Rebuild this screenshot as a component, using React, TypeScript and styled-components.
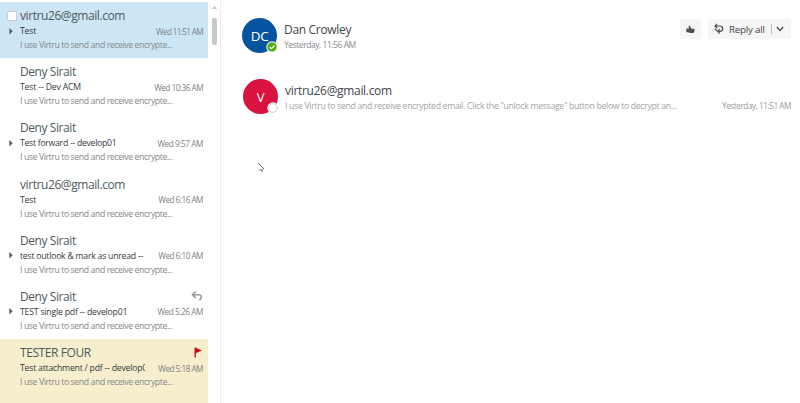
import React from "react";
import styled, { createGlobalStyle } from "styled-components";

const Global = createGlobalStyle`
  * { box-sizing: border-box; }
  html, body { margin: 0; background: #fff; overflow: hidden; }
  body { font-family: "Open Sans", "Noto Sans", sans-serif; white-space: nowrap; }
`;

const Page = styled.div`
  display: flex;
  width: 800px;
  height: 403px;
  overflow: hidden;
`;

const ListPane = styled.aside`
  display: flex;
  width: 221px;
  border-right: 1px solid #f0ede6;
`;

const MessageList = styled.div`
  width: 208px;
  padding-top: 2px;
`;

const Scrollbar = styled.div`
  width: 12px;
  display: flex;
  flex-direction: column;
  align-items: center;
  padding: 6px 0 0 1px;
`;

const Thumb = styled.div`
  width: 5px;
  height: 27px;
  margin-top: 9px;
  border-radius: 2px;
  background: #c9c6cc;
`;

const Row = styled.article<{ $bg: string; $last: boolean }>`
  height: ${(p) => (p.$last ? 66 : 56.2)}px;
  padding: 5px 5px 0 7px;
  background: ${(p) => p.$bg};
`;

const NameLine = styled.div`
  height: 17px;
  display: flex;
  align-items: center;
`;

const Gutter = styled.div`
  width: 13px;
  flex: none;
  display: flex;
  align-items: center;
`;

const Checkbox = styled.span`
  width: 10px;
  height: 10px;
  background: #fff;
  border: 1px solid #d2ccd6;
`;

const ListName = styled.span`
  flex: 1;
  font-size: 12px;
  line-height: 17px;
  letter-spacing: -0.42px;
  color: #4c5a60;
`;

const SubjectLine = styled.div`
  height: 14px;
  display: flex;
  align-items: center;
`;

const Subject = styled.span<{ $spacing: number }>`
  width: 125px;
  overflow: hidden;
  font-size: 8.7px;
  line-height: 14px;
  letter-spacing: ${(p) => p.$spacing}px;
  color: #333b3e;
`;

const Time = styled.span<{ $spacing: number }>`
  flex: 1;
  text-align: right;
  font-size: 8.2px;
  line-height: 13px;
  letter-spacing: ${(p) => p.$spacing}px;
  color: #7c8287;
`;

const Preview = styled.div`
  padding-left: 13px;
  font-size: 8.7px;
  line-height: 14px;
  letter-spacing: -0.4px;
  color: #83898c;
`;

const Reading = styled.main`
  flex: 1;
  padding: 18px 9px 0 21px;
`;

const Message = styled.section<{ $gap: number; $indent: number }>`
  display: flex;
  height: 36px;
  margin-bottom: ${(p) => p.$gap}px;
  padding-left: ${(p) => p.$indent}px;
`;

const Avatar = styled.div<{ $bg: string; $size: number }>`
  position: relative;
  width: 35px;
  height: 35px;
  flex: none;
  border-radius: 50%;
  background: ${(p) => p.$bg};
  color: #fff;
  font-size: ${(p) => p.$size}px;
  line-height: 37px;
  text-align: center;
  letter-spacing: -0.4px;
`;

const Presence = styled.svg`
  position: absolute;
  right: -1px;
  bottom: 0;
  width: 12px;
  height: 12px;
`;

const Details = styled.div`
  flex: 1;
  padding: 3px 0 0 7px;
`;

const Sender = styled.div`
  font-size: 12px;
  line-height: 17px;
  letter-spacing: -0.32px;
  color: #41474b;
`;

const Meta = styled.div`
  display: flex;
  justify-content: space-between;
`;

const MetaText = styled.span<{ $spacing: number; $size: number; $color: string }>`
  font-size: ${(p) => p.$size}px;
  line-height: 14px;
  letter-spacing: ${(p) => p.$spacing}px;
  color: ${(p) => p.$color};
`;

const Actions = styled.div`
  display: flex;
  gap: 7px;
  padding-top: 1px;
`;

const Button = styled.button<{ $width: number }>`
  display: flex;
  align-items: center;
  width: ${(p) => p.$width}px;
  height: 20px;
  padding: 0 6px;
  border: 0;
  background: #f6f6f6;
  color: #444;
  font: 9.7px "Open Sans", sans-serif;
  letter-spacing: -0.2px;
`;

const ReplyLabel = styled.span`
  margin-left: 5px;
  width: 42px;
  text-align: left;
`;

const Divider = styled.span`
  width: 1px;
  height: 10px;
  margin-right: 4px;
  background: #b6bec8;
`;

const Pointer = styled.svg`
  display: block;
  margin: 48px 0 0 16px;
`;

interface Mail {
  name: string;
  subject: string;
  time: string;
  subjectSpacing: number;
  timeSpacing: number;
  thread?: boolean;
  state?: "selected" | "replied" | "flagged";
}

const mails: Mail[] = [
  { name: "virtru26@gmail.com", subject: "Test", time: "Wed 11:51 AM", subjectSpacing: -0.2, timeSpacing: -0.66, thread: true, state: "selected" },
  { name: "Deny Sirait", subject: "Test -- Dev ACM", time: "Wed 10:36 AM", subjectSpacing: -0.17, timeSpacing: -0.5 },
  { name: "Deny Sirait", subject: "Test forward -- develop01", time: "Wed 9:57 AM", subjectSpacing: -0.28, timeSpacing: -0.42, thread: true },
  { name: "virtru26@gmail.com", subject: "Test", time: "Wed 6:16 AM", subjectSpacing: -0.2, timeSpacing: -0.5 },
  { name: "Deny Sirait", subject: "test outlook & mark as unread --", time: "Wed 6:10 AM", subjectSpacing: -0.24, timeSpacing: -0.5, thread: true },
  { name: "Deny Sirait", subject: "TEST single pdf -- develop01", time: "Wed 5:26 AM", subjectSpacing: -0.2, timeSpacing: -0.42, thread: true, state: "replied" },
  { name: "TESTER FOUR", subject: "Test attachment / pdf -- develop01", time: "Wed 5:18 AM", subjectSpacing: -0.22, timeSpacing: -0.5, state: "flagged" },
];

const background = (state?: Mail["state"]) =>
  state === "selected" ? "#cde6f5" : state === "flagged" ? "#f7eece" : "#fff";

const ReplyIcon = () => (
  <svg width="12" height="11" viewBox="0 0 12 11" fill="none" stroke="#999b9c" strokeWidth="1.6">
    <path d="M4.8 .6 1.4 3.7l3.4 3.1M1.7 3.7h5.5c3.6 0 4.2 3.5 1.2 5.4" />
  </svg>
);

const FlagIcon = () => (
  <svg width="9" height="11" viewBox="0 0 9 11">
    <path d="M.5 .5h1.3v10H.5zM1.8 .8l6 2.8-6 2.6z" fill="#c90a12" />
  </svg>
);

const MailRow = ({ mail, last }: { mail: Mail; last: boolean }) => (
  <Row $bg={background(mail.state)} $last={last}>
    <NameLine>
      <Gutter>{mail.state === "selected" && <Checkbox />}</Gutter>
      <ListName>{mail.name}</ListName>
      {mail.state === "replied" && <ReplyIcon />}
      {mail.state === "flagged" && <FlagIcon />}
    </NameLine>
    <SubjectLine>
      <Gutter>
        {mail.thread && (
          <svg width="7" height="7" viewBox="0 0 7 7">
            <path d="M2.3 0 5.8 3.2 2.3 6.4z" fill="#4d626d" />
          </svg>
        )}
      </Gutter>
      <Subject $spacing={mail.subjectSpacing}>{mail.subject}</Subject>
      <Time $spacing={mail.timeSpacing}>{mail.time}</Time>
    </SubjectLine>
    <Preview>I use Virtru to send and receive encrypte...</Preview>
  </Row>
);

export default function App() {
  return (
    <Page>
      <Global />
      <ListPane>
        <MessageList>
          {mails.map((mail, i) => (
            <MailRow key={i} mail={mail} last={i === mails.length - 1} />
          ))}
        </MessageList>
        <Scrollbar>
          <svg width="5" height="3" viewBox="0 0 5 3">
            <path d="M0 3 2.5 0 5 3z" fill="#bcc4d6" />
          </svg>
          <Thumb />
        </Scrollbar>
      </ListPane>
      <Reading>
        <Message $gap={25} $indent={0}>
          <Avatar $bg="#0654a0" $size={13.5}>
            DC
            <Presence viewBox="0 0 12 12">
              <circle cx="6" cy="6" r="5.7" fill="#fff" />
              <circle cx="6" cy="6" r="4.7" fill="#55ad09" />
              <path d="M3.6 6 5.4 7.7 8.5 4.6" fill="none" stroke="#fff" strokeWidth="1.3" />
            </Presence>
          </Avatar>
          <Details>
            <Sender>Dan Crowley</Sender>
            <Meta>
              <MetaText $spacing={-0.45} $size={8.5} $color="#858a8e">Yesterday, 11:56 AM</MetaText>
            </Meta>
          </Details>
          <Actions>
            <Button $width={21} aria-label="Like">
              <svg width="9" height="9" viewBox="0 0 9 9">
                <path d="M.3 3.4h1.3L2.8 3.8 2.7.8l.9-.2 1.6 2.8 3.2.5.2.8-.4 2.6-1 .8H4L2 7.2H.3z" fill="#505050" />
              </svg>
            </Button>
            <Button $width={83}>
              <svg width="10" height="12" viewBox="0 0 10 12" fill="none" stroke="#505050" strokeWidth="1.2">
                <path d="M3.2.8 1 3l2.3 2.2M1.2 3h4.5c4 0 4 5.3 0 5.3H4M5.8 6.1 3.7 8.3l2.1 2.3M.8 5.6l2.4 2.5" />
              </svg>
              <ReplyLabel>Reply all</ReplyLabel>
              <Divider />
              <svg width="8" height="6" viewBox="0 0 8 6" fill="none" stroke="#505050" strokeWidth="1.4">
                <path d="m.8 1 3.2 3.4L7.2 1" />
              </svg>
            </Button>
          </Actions>
        </Message>
        <Message $gap={0} $indent={1}>
          <Avatar $bg="#d9123f" $size={13}>
            V
            <Presence viewBox="0 0 12 12">
              <circle cx="6" cy="6" r="5.7" fill="#fff" />
              <circle cx="6" cy="6" r="4.3" fill="#fff" stroke="#a9c9d8" strokeWidth=".8" />
            </Presence>
          </Avatar>
          <Details>
            <Sender>virtru26@gmail.com</Sender>
            <Meta>
              <MetaText $spacing={-0.31} $size={8.7} $color="#a2a4a6">
                I use Virtru to send and receive encrypted email. Click the "unlock message" button below to decrypt an...
              </MetaText>
              <MetaText $spacing={-0.5} $size={8.3} $color="#979a9d">Yesterday, 11:51 AM</MetaText>
            </Meta>
          </Details>
        </Message>
        <Pointer width="8" height="11" viewBox="0 0 8 11">
          <path d="M.5.5 6 6" stroke="#666" strokeWidth="1" />
          <path d="m0 8 2-2h3v3H3.5L2.5 7.5z" fill="#aaa" />
        </Pointer>
      </Reading>
    </Page>
  );
}
